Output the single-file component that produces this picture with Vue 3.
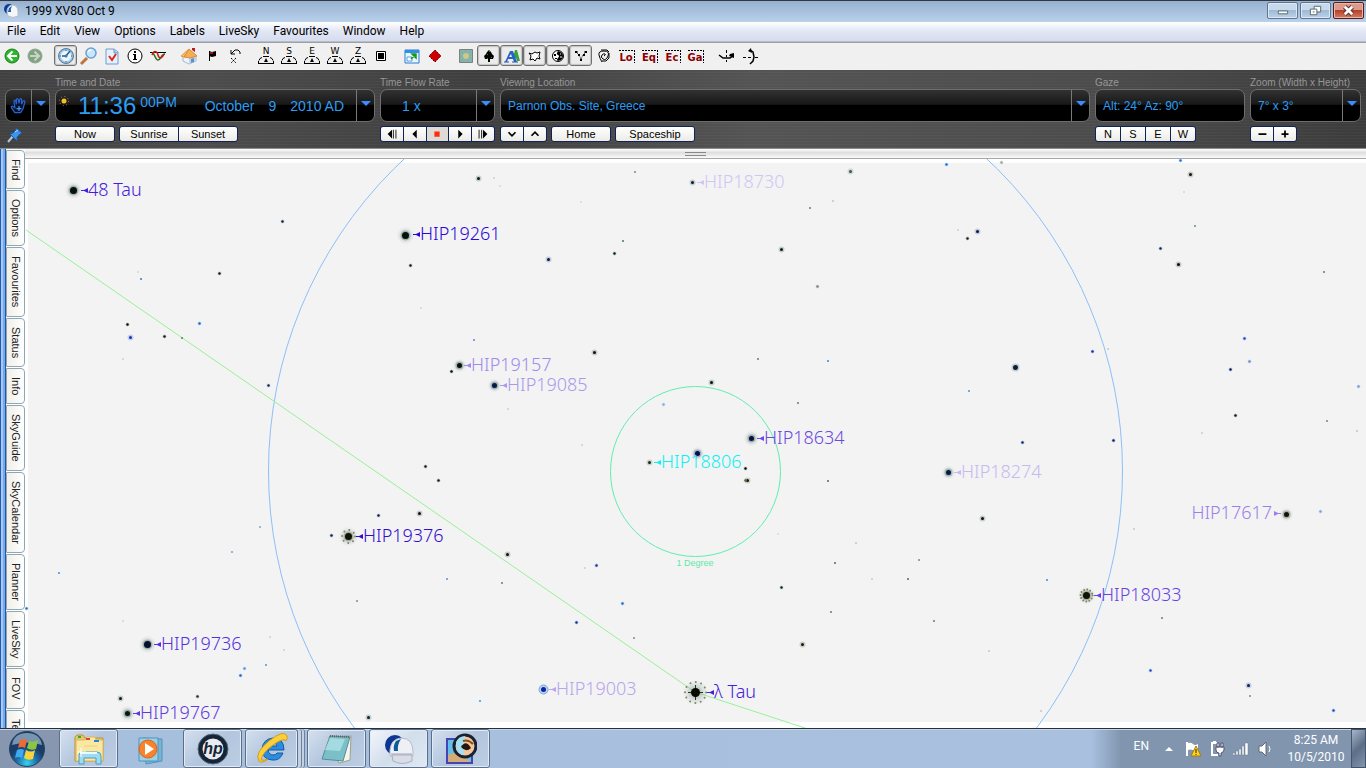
<script setup>
const menus = ["File", "Edit", "View", "Options", "Labels", "LiveSky", "Favourites", "Window", "Help"];

const dome = (letter) =>
  `<text x="10" y="8" text-anchor="middle" font-size="9" font-weight="500">${letter}</text>
   <path d="M7 10.500h6M4 12.500l2-1M16 12.500l-2-1M3 14.500l1-2M17 14.500l-1-2M2 17.500h16M2.500 17v-2M17.500 17v-2" fill="none" stroke="#000"/>
   <path d="M10 12l2 4H8z"/>`;

const frame = (letters) =>
  `<path d="M2 4.500h15M17.500 4v13" fill="none" stroke="#000" stroke-dasharray="2 1"/>
   <text x="9" y="15" text-anchor="middle" font-size="10" font-weight="700" fill="#8c0000">${letters}</text>`;

const toolbar = [
  [
    { name: "Back", svg: '<circle cx="10" cy="10" r="7" fill="#2fb52f" stroke="#168016"/><path d="M10.500 5.500L6 10l4.500 4.500M6.500 10H15" fill="none" stroke="#fff" stroke-width="2"/>' },
    { name: "Forward", svg: '<circle cx="10" cy="10" r="7" fill="#82a182" stroke="#8fa98f"/><path d="M9.500 5.500L14 10l-4.500 4.500M13.500 10H5" fill="none" stroke="#c5d6c5" stroke-width="2"/>' },
  ],
  [
    { name: "Time", on: true, svg: '<circle cx="10" cy="10" r="7.500" fill="#8db9dc" stroke="#4d7da8"/><circle cx="10" cy="10" r="5.500" fill="#eef6fc" stroke="#bdd7ea"/><path d="M10 10l4-5M10 10H6" stroke="#285e90" stroke-width="1.500"/><circle cx="10" cy="10" r="1.500" fill="#3b78ac"/><path d="M10 4v1M10 15v1M4 10h1M15 10h1" stroke="#456"/>' },
    { name: "Find", svg: '<path d="M8 12l-6 6" stroke="#bd7440" stroke-width="3"/><circle cx="12" cy="7" r="5" fill="#c7e6ff" stroke="#6a9fd0" stroke-width="1.500"/><path d="M9 6q1-2 3-2" fill="none" stroke="#fff" stroke-width="1.500"/>' },
    { name: "Planner", svg: '<path d="M4 3h8l4 3v12H4z" fill="#e6f1ff" stroke="#6f9bd0"/><path d="M12 3v4h4" fill="#a9c7ee" stroke="#6f9bd0"/><path d="M7 10l3 4 4-6" fill="none" stroke="#e02a16" stroke-width="2"/>' },
    { name: "Info", svg: '<circle cx="10" cy="10" r="7" fill="#fff" stroke="#000"/><path d="M9 5h2v2H9zM8 8h3v5h1v1H8v-1h1V9H8z"/>' },
    { name: "Graph", svg: '<path d="M2 6.500h16" stroke="#000"/><path d="M4 7c3 0 3 7 6 7s3-6 7-6" fill="none" stroke="#147a14" stroke-width="1.500"/><path d="M4 9c2-5 5-4 6 0s4 4 6-1" fill="none" stroke="#d01818" stroke-width="1.500"/>' },
  ],
  [
    { name: "Home", svg: '<path d="M4 10l6-5 7 6v4l-7 3-6-3z" fill="#eef4fb" stroke="#a0b8d0"/><path d="M10 12l7-2v5l-7 3z" fill="#c2d4e8"/><path d="M2 10l8-7 1 1-6 7z" fill="#ffc06a" stroke="#e09a44"/><path d="M10 3l8 7-7 2-6-1z" fill="#f7ad55" stroke="#d98a32"/><path d="M13 2h3v4l-3-2z" fill="#b51c1c"/><path d="M12 13l3-1v4l-3 1z" fill="#6090c8"/>' },
    { name: "Flag", svg: '<path d="M7.500 5v10" stroke="#000"/><path d="M7 5l3 1 4-1v5l-4 1-3-1z"/><path d="M8 6h3v2H8z" fill="#a01020"/>' },
    { name: "Clear angle", svg: '<path d="M6 8l2-2 2-2h3l2 2v2M6 4v4h4" fill="none" stroke="#000"/><path d="M6 12l5 5M11 12l-5 5" stroke="#000" stroke-dasharray="2 1"/>' },
  ],
  [
    ...["N", "S", "E", "W", "Z"].map((d) => ({ name: `Look ${d}`, svg: dome(d) })),
    { name: "Full view", svg: '<path d="M5.500 5.500h9v9h-9z" fill="#fff" stroke="#000"/><path d="M7 7h6v6H7z"/>' },
  ],
  [
    { name: "Full screen", svg: '<path d="M3 4h14v13H3z" fill="#eaf6ff" stroke="#2d7bd0"/><path d="M3 4h14v3H3z" fill="#2f8fe4"/><path d="M5 11h5v4H5z" fill="#fff" stroke="#58a0e0"/><path d="M9 13l4-4M10 8h4v4z" fill="#16951c" stroke="#16951c" stroke-width="1.500"/>' },
    { name: "Marker", svg: '<path d="M10 4l6 6-6 6-6-6z" fill="#d00000" stroke="#600" stroke-dasharray="2 1"/>' },
  ],
  [
    { name: "Daylight", svg: '<path d="M3.500 3.500h13v13h-13z" fill="#7fb3ae" stroke="#808080"/><circle cx="10" cy="10" r="3" fill="#d2c788"/><circle cx="10" cy="10" r="5" fill="none" stroke="#c9bc78" stroke-dasharray="1 3"/>' },
    { name: "Horizon", on: true, svg: '<path d="M10 4l2 2 1 2 2 2-1 3h-3v3H9v-3H6l-1-3 2-2 1-2z"/><path d="M8 8h1v1H8zM12 11h1v1h-1zM9 13H8v-1h1zM10 5h1v1h-1z" fill="#2c8c2c"/>' },
    { name: "Labels", on: true, svg: '<path d="M11 12l2-8h2l3 11h-3l-1-3z" fill="#35a636"/><path fill-rule="evenodd" d="M3 16L8 5h3l4 11h-3l-1-3H6l-1 3zM7 11h3L9 8z" fill="#2a63c8"/><path d="M2 16h5M10 16h6" stroke="#2458a8"/>' },
    { name: "Stars", on: true, svg: '<path d="M10 6l2 1 3-1-1 4 1 3-3-1-2 3-2-2-3 1 1-4-2-3 3 1z" fill="#fff" stroke="#000"/>' },
    { name: "Planets", on: true, svg: '<circle cx="10" cy="10" r="5.500" fill="#fff" stroke="#000"/><path d="M10 5q5 1 5 5t-5 5q-2-1 0-3t0-3-1-2zM6 8h2v2H6zM7 12h2v1H7z"/><path d="M12 8h1M12 11h2" stroke="#fff"/>' },
    { name: "Constellations", on: true, svg: '<path d="M5 6l3 3 2 4M15 6l-3 3-2 4M6 6h2M13 6h2" fill="none" stroke="#000" stroke-dasharray="1 1"/><path d="M4 5h2v2H4zM14 5h2v2h-2zM7 8h2v2H7zM12 8h2v2h-2zM9 13h2v2H9z"/>' },
    { name: "Deep space", svg: '<path d="M10 10q2-1 1-2t-3 1 1 4 5-3-4-5-5 4 3 7M7 4h6l2 2M15 7v5l-3 3H8" fill="none" stroke="#000"/>' },
    ...["Lo", "Eq", "Ec", "Ga"].map((g) => ({ name: `${g} grid`, svg: frame(g) })),
  ],
  [
    { name: "Rotate left", svg: '<path d="M9.500 4v3M9.500 9v2M9.500 14v2" stroke="#000"/><path d="M2 9l4 3h7l3-2" fill="none" stroke="#000" stroke-width="1.500"/><path d="M13 8l4-1v5l-5-2z"/>' },
    { name: "Rotate up", svg: '<path d="M3 11.500h3M8 11.500h3M15 11.500h3" stroke="#000"/><path d="M10 4l3 2 1 5-1 4-3 3" fill="none" stroke="#000" stroke-width="1.500"/><path d="M8 5l3-3 1 5z"/>' },
  ],
];

const tabs = ["Find", "Options", "Favourites", "Status", "Info", "SkyGuide", "SkyCalendar", "Planner", "LiveSky", "FOV", "Te"];

// x, y, radius, colour
const stars = [
  [73, 190, 4, "#04120a"], [405, 235, 4, "#04120a"], [147, 644, 4, "#02122c"], [127, 713, 3, "#04180f"],
  [348, 536, 4, "#101402"], [1086, 595, 4, "#101402"], [543, 689, 3, "#0428a8"],
  [751, 438, 3, "#02143c"], [697, 453, 3, "#060a5c"], [459, 365, 3, "#041208"], [494, 385, 3, "#061a44"],
  [948, 472, 3, "#061e3c"], [1286, 514, 3, "#141604"], [692, 182, 2, "#06222c"], [1015, 367, 3, "#062038"],
  [548, 259, 2, "#041a54"], [130, 337, 2, "#0838c4"], [419, 513, 2, "#0c1804"], [507, 554, 2, "#04180c"],
  [850, 171, 2, "#3c5850"], [1190, 174, 2, "#0c1c04"], [1178, 264, 2, "#02100a"], [982, 518, 2, "#04180c"],
  [711, 382, 2, "#04180c"], [649, 462, 2, "#183018"], [747, 480, 2, "#141804"], [745, 480, 1, "#507040"],
  [594, 352, 2, "#04180c"], [781, 249, 2, "#04221c"], [977, 231, 2, "#04185c"], [478, 178, 2, "#042410"],
  [120, 698, 2, "#042410"], [368, 717, 2, "#042830"], [802, 644, 2, "#102008"], [1248, 685, 2, "#042464"],
  [282, 221, 1, "#082844"], [219, 273, 1, "#082410"], [127, 324, 1, "#041008"], [164, 336, 1, "#082010"],
  [199, 323, 1, "#1868e0"], [268, 385, 1, "#102c60"], [410, 265, 1, "#082410"], [614, 253, 1, "#082410"],
  [451, 371, 1, "#041008"], [425, 466, 1, "#082410"], [438, 480, 1, "#082018"], [378, 515, 1, "#082060"],
  [331, 535, 1, "#082060"], [596, 565, 1, "#1838a0"], [622, 603, 1, "#1870d0"], [576, 622, 1, "#0830b0"],
  [240, 675, 1, "#1868d0"], [244, 668, 1, "#4898e8"], [26, 608, 1, "#2870c8"], [197, 696, 1, "#183820"],
  [745, 468, 1, "#041008"], [781, 587, 1, "#043028"], [946, 164, 1, "#1870e0"], [1180, 160, 1, "#1870e0"],
  [967, 238, 1, "#102c10"], [1160, 248, 1, "#082c60"], [1092, 351, 1, "#0838a0"], [1244, 338, 1, "#1048c8"],
  [1230, 369, 1, "#081868"], [1235, 415, 1, "#082010"], [1022, 442, 1, "#082c70"], [1113, 440, 1, "#081c70"],
  [1150, 670, 1, "#1858c0"], [1333, 710, 1, "#1050c8"], [663, 404, 1, "#78b0e8"], [1320, 511, 1, "#68a8e8"],
  [1358, 386, 1, "#7898d8"], [1249, 361, 1, "#6888d0"], [817, 286, 1, "#708878"], [1001, 162, 1, "#90a898"],
];

const faintStars = [
  [140, 278, "#7090d8"], [181, 337, "#70a070"], [622, 240, "#709888"], [634, 171, "#90a898"], [473, 339, "#a090e0"],
  [259, 526, "#a0b8d0"], [231, 551, "#a0b8d8"], [58, 572, "#68a8e8"], [446, 578, "#88a8c8"], [501, 582, "#80a090"],
  [356, 600, "#98a8b0"], [633, 637, "#90a8c0"], [265, 664, "#68b0e8"], [479, 700, "#68b0e8"], [797, 402, "#80a088"],
  [827, 480, "#709078"], [834, 562, "#789078"], [809, 207, "#80a088"], [1194, 225, "#80a8a8"], [1323, 271, "#78a088"],
  [757, 358, "#80a088"], [827, 360, "#70a0d8"], [968, 390, "#78a8d8"], [1326, 420, "#88a8a0"], [918, 559, "#a0a0a0"],
  [907, 578, "#709078"], [1046, 579, "#78a0d8"], [1161, 617, "#80a090"], [830, 611, "#80a088"], [933, 620, "#80a078"],
  [1249, 695, "#90a8a0"], [122, 358, "#d4d8f0"], [493, 177, "#d8dcd8"], [499, 185, "#dce0dc"], [580, 201, "#dde0dd"],
  [420, 307, "#d8dcec"], [507, 408, "#d8d8d8"], [581, 444, "#d4d8d4"], [122, 620, "#dcdcdc"], [269, 636, "#d8d8d8"],
  [283, 649, "#d8d8d8"], [855, 542, "#ccd4cc"], [871, 578, "#d4d4d4"], [832, 200, "#ccccec"], [1107, 348, "#d0d4d0"],
  [1356, 430, "#ccd0d4"], [1133, 528, "#d0d4d0"], [988, 650, "#ccd4cc"], [1040, 710, "#d0d4d0"], [1201, 432, "#d4d8d4"],
  [777, 533, "#dde0dd"], [584, 567, "#d8d8d8"], [137, 271, "#dde0dd"], [957, 229, "#d8dcd8"], [1183, 191, "#dcdcdc"],
];

const halos = [
  [73, 190, 9], [405, 235, 9], [147, 644, 9], [127, 713, 8], [751, 438, 8], [697, 453, 7],
  [348, 536, 10], [1086, 595, 9], [459, 365, 7], [494, 385, 7], [948, 472, 7], [1286, 514, 7], [695, 692, 13],
];

const labels = [
  { x: 81, y: 190, text: "48 Tau", color: "#4420dc" },
  { x: 413, y: 234, text: "HIP19261", color: "#2a06d8" },
  { x: 697, y: 182, text: "HIP18730", color: "#cfc6f3" },
  { x: 464, y: 365, text: "HIP19157", color: "#a08aec" },
  { x: 500, y: 385, text: "HIP19085", color: "#a99aea" },
  { x: 757, y: 438, text: "HIP18634", color: "#6a4ae0" },
  { x: 654, y: 462, text: "HIP18806", color: "#10f0f0" },
  { x: 954, y: 472, text: "HIP18274", color: "#c6baf0" },
  { x: 356, y: 536, text: "HIP19376", color: "#300cd0" },
  { x: 1094, y: 595, text: "HIP18033", color: "#6644e4" },
  { x: 154, y: 644, text: "HIP19736", color: "#5430e0" },
  { x: 133, y: 713, text: "HIP19767", color: "#5c3adc" },
  { x: 549, y: 689, text: "HIP19003", color: "#b6a6ec" },
  { x: 707, y: 692, text: "λ Tau", color: "#4420d8" },
];

const flow = [
  { name: "Step back", d: "M3 8l5-5v10zM9 3h1v10H9zM12 3h1v10h-1z" },
  { name: "Run back", d: "M5 8l5-5v10z" },
  { name: "Stop", d: "M5 5h6v6H5z" },
  { name: "Run forward", d: "M11 8L6 3v10z" },
  { name: "Step forward", d: "M13 8L8 3v10zM6 3h1v10H6zM3 3h1v10H3z" },
];

const apps = [
  { name: "Explorer", kind: "open", svg: '<path d="M2 4l2-2h6l2 3h18v23H2z" fill="#e9c768" stroke="#bb9337"/><path d="M3 7h9l2-3h8l1 3h7v21H3z" fill="#f9e7a2" stroke="#d9b75c"/><path d="M5 3h3v2H5z" fill="#3a3"/><path d="M13 5h4v2h-4z" fill="#d43"/><path d="M21 7h5v2h-5z" fill="#28d"/><path d="M11 13h13" stroke="#ecd07f"/><path d="M6 31V22q0-3 3-3h15q4 0 4 4v8h-5v-6H11v6z" fill="#9edaf0" stroke="#4c9ec4"/><path d="M7 20h17" stroke="#e8fbff" stroke-width="2"/><path d="M8 15v9M4 19h9" stroke="#fff"/>' },
  { name: "Media Player", kind: "pinned", svg: '<path d="M8 5l19 1v22l-16 3z" fill="#76b5d6" stroke="#5693b8"/><path d="M4 5h19v23H4z" fill="#9bd0e8" stroke="#4d94bd"/><circle cx="13" cy="16" r="9" fill="#f5842c" stroke="#dd6113"/><path d="M10 10l9 6-9 6z" fill="#fff"/>' },
  { name: "HP", kind: "open", svg: '<circle cx="16" cy="16" r="15" fill="#152536" stroke="#52677c"/><circle cx="16" cy="16" r="10.500" fill="#e8ebef"/><text x="16" y="21" text-anchor="middle" font-size="16" font-style="italic" font-weight="700" fill="#152536">hp</text>' },
  { name: "Internet Explorer", kind: "stack", svg: '<path fill-rule="evenodd" d="M28 17H12q1 5 5 5 3 0 4-2h6q-3 8-11 7-10-1-10-11Q7 6 17 5q11 0 11 12zM12 13h9q-1-4-4-4-4 0-5 4z" fill="#2b8de0" stroke="#145aa4"/><path d="M3 28Q-2 20 13 8t18-5q1 2-1 5-2-4-13 4T5 27q3 1 7-1-6 5-9 2z" fill="#f9cf3c" stroke="#d59b16"/>' },
  { name: "Notepad", kind: "open", svg: '<path d="M8 4l22-1-1 24-11 3z" fill="#f5f5ed" stroke="#a0a08c"/><path d="M9 3l20 1-7 24L1 26z" fill="#7bbfc8" stroke="#548e98"/><path d="M9 5l15 1-5 12-15-1z" fill="#a3dbe0"/><path d="M9 3l20 1" stroke="#666" stroke-width="2" stroke-dasharray="1 1"/>' },
  { name: "Starry Night", kind: "active", svg: '<circle cx="12" cy="12" r="10" fill="#0c3694"/><path d="M7 17q1-11 11-12 12 0 12 14v4H7z" fill="#eef0f5" stroke="#b7bcc8"/><path d="M9 22h20v6q-10 5-19 0z" fill="#dadde8" stroke="#a9afbf"/><path d="M13 8l5-2q-4 6-3 12h-4q-1-6 2-10z" fill="#0c5b9a"/><path d="M8 21h21" stroke="#a0a5b8"/>' },
  { name: "Viewer", kind: "open", svg: '<path d="M2 6h25v24H2z" fill="#65bfe5" stroke="#4444b4" stroke-width="2"/><path d="M3 22l9-3 14 10H3z" fill="#d5ab78"/><circle cx="20" cy="13" r="11" fill="#f3c79a" stroke="#182232" stroke-width="3"/><path d="M11 9q3-6 9-6l-1 19q-7-1-8-8z" fill="#a7def0"/><path d="M16 14q5-8 10 1-5 5-10-1z" fill="#27160f"/><path d="M18 8q5-2 10 3" fill="none" stroke="#8d4b20" stroke-width="2"/>' },
];
</script>

<template>
  <div class="window">
    <header class="titlebar">
      <svg class="app-icon" viewBox="0 0 16 16" aria-hidden="true">
        <circle cx="6" cy="6" r="5" fill="#0b3c9c" />
        <path d="M4 9q0-6 5-7 6 0 6 7v4q-5 3-10 0z" fill="#f4f6fa" stroke="#b4bccb" />
        <path d="M6 5l3-2q-2 3-1 6H5z" fill="#1264a6" />
      </svg>
      <h1>1999 XV80 Oct 9</h1>
      <div class="window-buttons">
        <button aria-label="Minimize">
          <svg viewBox="0 0 28 16"><path d="M9.500 8.500h10v3h-10z" fill="#fff" stroke="#566" /></svg>
        </button>
        <button aria-label="Restore">
          <svg viewBox="0 0 28 16">
            <path d="M12.500 3.500h7v6h-7z" fill="#fff" stroke="#566" />
            <path d="M8.500 6.500h7v6h-7z" fill="#fff" stroke="#566" />
            <path d="M11 9h2v1h-2z" fill="#566" />
          </svg>
        </button>
        <button class="close" aria-label="Close">
          <svg viewBox="0 0 28 16">
            <path d="M10 4l8 8M18 4l-8 8" stroke="#5d3030" stroke-width="5" />
            <path d="M10 4l8 8M18 4l-8 8" stroke="#fff" stroke-width="3" />
          </svg>
        </button>
      </div>
    </header>

    <nav class="menubar">
      <button v-for="menu in menus" :key="menu">{{ menu }}</button>
    </nav>

    <div class="toolbar" role="toolbar">
      <div v-for="(group, i) in toolbar" :key="i" class="tool-group">
        <button v-for="tool in group" :key="tool.name" :class="{ on: tool.on }" :aria-label="tool.name">
          <svg viewBox="0 0 20 20" v-html="tool.svg"></svg>
        </button>
      </div>
    </div>

    <section class="panel">
      <div class="group">
        <span class="caption"></span>
        <div class="lcd">
          <button class="hand" aria-label="Hand tool">
            <svg viewBox="0 0 24 24">
              <path d="M7 20l-4-6q-1-2 1-2l3 2-1-8q1-2 2 0l1 4V4q1-2 2 0l1 5 1-5q1-2 2 0v6l2-4q2-1 2 1l-2 8-3 5z" fill="#04122c" stroke="#2d62c8" stroke-width="1.500" />
              <path d="M12 12v6M9 15h6" stroke="#4590ff" stroke-width="1.500" />
            </svg>
          </button>
          <button class="drop" aria-label="Choose tool"></button>
        </div>
        <button class="pin" aria-label="Pin panel">
          <svg viewBox="0 0 16 16">
            <path d="M1 15l5-6" stroke="#b0c4dc" stroke-width="2" />
            <path d="M3 7l3-1 3-3V1l6 5-2 1-3 3v4z" fill="#3d94ec" stroke="#1c5da8" />
            <path d="M8 5l3-2" stroke="#c0e0ff" />
          </svg>
        </button>
      </div>

      <div class="group">
        <span class="caption">Time and Date</span>
        <div class="lcd">
          <svg class="sun" viewBox="0 0 12 12" aria-hidden="true">
            <circle cx="6" cy="6" r="4.500" fill="none" stroke="#a09470" stroke-dasharray="1 2.530" />
            <circle cx="6" cy="6" r="2.500" fill="#f4c21c" />
          </svg>
          <span class="time">11:36</span>
          <span class="seconds">00PM</span>
          <span class="date"><span>October</span><span>9</span><span>2010 AD</span></span>
          <button class="drop" aria-label="Choose time"></button>
        </div>
        <div class="buttons">
          <div class="set"><button class="wide">Now</button></div>
          <div class="set"><button class="wide">Sunrise</button><button class="wide">Sunset</button></div>
        </div>
      </div>

      <div class="group">
        <span class="caption">Time Flow Rate</span>
        <div class="lcd">
          <span class="rate">1 x</span>
          <button class="drop" aria-label="Choose rate"></button>
        </div>
        <div class="buttons">
          <div class="set">
            <button v-for="step in flow" :key="step.name" :class="{ stop: step.name === 'Stop' }" :aria-label="step.name">
              <svg viewBox="0 0 16 16"><path :d="step.d" /></svg>
            </button>
          </div>
        </div>
      </div>

      <div class="group">
        <span class="caption">Viewing Location</span>
        <div class="lcd">
          <span class="value">Parnon Obs. Site, Greece</span>
          <button class="drop" aria-label="Choose location"></button>
        </div>
        <div class="buttons">
          <div class="set">
            <button aria-label="Descend"><svg viewBox="0 0 16 16"><path class="line" d="M4 6l4 4 4-4" /></svg></button>
            <button aria-label="Ascend"><svg viewBox="0 0 16 16"><path class="line" d="M4 10l4-4 4 4" /></svg></button>
          </div>
          <div class="set"><button class="wide">Home</button></div>
          <div class="set"><button class="wider">Spaceship</button></div>
        </div>
      </div>

      <div class="group">
        <span class="caption">Gaze</span>
        <div class="lcd"><span class="value">Alt: 24° Az: 90°</span></div>
        <div class="buttons">
          <div class="set compass"><button v-for="d in ['N', 'S', 'E', 'W']" :key="d">{{ d }}</button></div>
        </div>
      </div>

      <div class="group">
        <span class="caption">Zoom (Width x Height)</span>
        <div class="lcd">
          <span class="value">7° x 3°</span>
          <button class="drop" aria-label="Choose zoom"></button>
        </div>
        <div class="buttons">
          <div class="set">
            <button aria-label="Zoom out"><svg viewBox="0 0 16 16"><path d="M4 7h9v2H4z" /></svg></button>
            <button aria-label="Zoom in"><svg viewBox="0 0 16 16"><path d="M4 7h3V4h2v3h3v2H9v3H7V9H4z" /></svg></button>
          </div>
        </div>
      </div>
    </section>

    <main class="workspace">
      <nav class="side-tabs">
        <button v-for="tab in tabs" :key="tab">{{ tab }}</button>
      </nav>
      <div class="view">
        <div class="splitter"><span class="grip"></span></div>
        <svg class="sky" viewBox="25 159 1341 569" preserveAspectRatio="xMidYMid slice">
          <defs>
            <radialGradient id="halo">
              <stop offset="0.300" stop-color="#5c7c78" stop-opacity="0.400" />
              <stop offset="1" stop-color="#a8c0bc" stop-opacity="0" />
            </radialGradient>
          </defs>
          <rect x="28" y="163" width="1338" height="559" fill="#f3f3f3" />
          <circle cx="695.500" cy="471" r="427" class="field" />
          <path d="M26 230L695 692L808 729" class="ecliptic" />
          <circle cx="695.500" cy="471.500" r="85" class="degree" />
          <text x="695" y="566" class="degree-label">1 Degree</text>

          <circle v-for="(h, i) in halos" :key="'h' + i" :cx="h[0] + 0.5" :cy="h[1] + 0.5" :r="h[2]" fill="url(#halo)" />
          <rect v-for="(f, i) in faintStars" :key="'f' + i" :x="f[0]" :y="f[1]" width="2" height="2" :fill="f[2]" />
          <g v-for="(s, i) in stars" :key="'s' + i" :fill="s[3]">
            <circle :cx="s[0] + 0.5" :cy="s[1] + 0.5" :r="s[2] + 1" opacity="0.180" />
            <circle :cx="s[0] + 0.5" :cy="s[1] + 0.5" :r="s[2] < 2 ? 1.2 : s[2] - 0.5" />
          </g>

          <circle cx="348.500" cy="536.500" r="6.500" class="variable" stroke-dasharray="0 5.105" />
          <circle cx="1086.500" cy="595.500" r="6" class="variable" stroke-dasharray="0 3.141" />
          <circle cx="543.500" cy="689.500" r="4.500" fill="none" stroke="#68a4e0" />
          <circle cx="695.500" cy="692.500" r="10.500" class="variable" stroke-dasharray="0 5.498" />
          <path d="M695.500 685v15M688 692.500h15" stroke="#30340c" />
          <circle cx="695.500" cy="692.500" r="4.500" fill="#080a00" />

          <g v-for="label in labels" :key="label.text" :fill="label.color">
            <path :d="`M${label.x} ${label.y}h3l4-2v5l-4-2h-3z`" />
            <text :x="label.x + 7" :y="label.y + 6" class="star-label">{{ label.text }}</text>
          </g>
          <g fill="#9a80ea">
            <path d="M1281 513h-3l-4-2v5l4-2h3z" />
            <text x="1272" y="519" text-anchor="end" class="star-label">HIP17617</text>
          </g>
        </svg>
      </div>
    </main>

    <footer class="taskbar">
      <button class="start" aria-label="Start">
        <svg viewBox="0 0 38 38">
          <defs>
            <radialGradient id="orb" cy="0.900">
              <stop offset="0" stop-color="#35d3ef" />
              <stop offset="0.600" stop-color="#1b6ba7" />
              <stop offset="1" stop-color="#193d68" />
            </radialGradient>
          </defs>
          <circle cx="19" cy="19" r="17.500" fill="url(#orb)" stroke="#28435f" />
          <path d="M4 15Q6 3 19 3t15 12q-14-5-30 0z" fill="#c5dced" opacity="0.550" />
          <path d="M12 10q4-2 7 0l-2 8q-3-2-7 0z" fill="#ee6a34" />
          <path d="M21 11q4 2 9-1l-2 9q-5 2-9-1z" fill="#8bc643" />
          <path d="M9 20q4-2 7 0l-2 8q-3-2-7 0z" fill="#3eaaf0" />
          <path d="M18 20q5 3 9 0l-2 9q-5 2-9-1z" fill="#fcd23a" />
        </svg>
      </button>
      <div class="apps">
        <button v-for="app in apps" :key="app.name" :class="app.kind" :aria-label="app.name">
          <svg viewBox="0 0 32 32" v-html="app.svg"></svg>
        </button>
      </div>
      <div class="tray">
        <span class="lang">EN</span>
        <svg viewBox="0 0 16 16"><path d="M4 10l4-4 4 4z" fill="#fff" /></svg>
        <svg viewBox="0 0 16 16">
          <path d="M2 1v14" stroke="#fff" stroke-width="2" />
          <path d="M3 2q3-1 5 1t5 0v6q-3 1-5 0T3 9z" fill="#fff" />
          <path d="M11 5l5 10H6z" fill="#ffd42a" stroke="#a87b00" />
          <path d="M11 8v4M11 13v1" stroke="#222" />
        </svg>
        <svg viewBox="0 0 16 16">
          <path d="M8 2H3v12h6M4 1h3" fill="none" stroke="#fff" stroke-width="2" />
          <path d="M7 6h8v3q-1 3-3 3v3h-2v-3q-3 0-3-3zM8 2h2v4H8zM12 2h2v4h-2z" fill="#fff" stroke="#557" />
        </svg>
        <svg viewBox="0 0 16 16">
          <path d="M0 12h2v2H0zM3 10h2v4H3zM6 8h2v6H6zM9 5h2v9H9zM12 2h3v12h-3z" fill="#fff" stroke="#68788e" stroke-width="0.500" />
        </svg>
        <svg viewBox="0 0 16 16">
          <path d="M2 5h3l4-4v14l-4-4H2z" fill="#fff" stroke="#667" />
          <path d="M12 5q2 3 0 6" fill="none" stroke="#fff" />
        </svg>
        <div class="clock"><span>8:25 AM</span><span>10/5/2010</span></div>
      </div>
      <button class="show-desktop" aria-label="Show desktop"></button>
    </footer>
  </div>
</template>

<style>
body {
  margin: 0;
}
</style>

<style scoped>
.window {
  display: flex;
  flex-direction: column;
  height: 100vh;
  overflow: hidden;
  background: #fff;
  color: #000;
  font-family: "Liberation Sans", Arial, sans-serif;
}

button {
  margin: 0;
  padding: 0;
  border: 0;
  background: none;
  color: inherit;
  font: inherit;
}

svg {
  display: block;
}

.titlebar {
  display: flex;
  flex: none;
  align-items: center;
  gap: 6px;
  box-sizing: border-box;
  height: 22px;
  padding: 0 2px 2px 3px;
  border-top: 1px solid #34373c;
  background: linear-gradient(#96b1d0, #b9d1ea);
}

.app-icon {
  width: 16px;
  height: 16px;
}

.titlebar h1 {
  flex: 1;
  margin: 0;
  font: 400 12px/20px Roboto, sans-serif;
}

.window-buttons {
  display: flex;
  gap: 2px;
}

.window-buttons button {
  border: 1px solid #5c7694;
  border-radius: 2px;
  background: linear-gradient(#c8d9eb 45%, #9fb9d6 50%, #bcd2e8);
  box-shadow: inset 0 0 0 1px #dce8f4;
}

.window-buttons svg {
  width: 29px;
  height: 15px;
}

.window-buttons .close {
  border-color: #571b1b;
  background: linear-gradient(#dc9a8a 45%, #b8402b 50%, #d07d60);
  box-shadow: inset 0 0 0 1px #e9b7a9;
}

.menubar {
  display: flex;
  flex: none;
  gap: 14px;
  box-sizing: border-box;
  height: 20px;
  padding: 0 7px;
  border-bottom: 1px solid #b5bccd;
  background: linear-gradient(#fff, #e3e8f5 45%, #d5dcee);
  font: 400 12px/19px Roboto, sans-serif;
}

.toolbar {
  display: flex;
  flex: none;
  align-items: center;
  gap: 8px;
  box-sizing: border-box;
  height: 28px;
  padding-bottom: 2px;
  border-top: 1px solid #a0a0a0;
  background: #f0f0f0;
}

.tool-group {
  display: flex;
}

.tool-group button {
  display: grid;
  place-items: center;
  box-sizing: border-box;
  width: 23px;
  height: 21px;
  border: 1px solid transparent;
  border-radius: 3px;
}

.tool-group .on {
  border-color: #707070;
  background: #ececec;
  box-shadow: inset 0 0 1px 1px #c4c4c4;
}

.tool-group svg {
  width: 20px;
  height: 20px;
  margin: -1px 0;
  font-family: "DejaVu Sans", sans-serif;
}

.panel {
  display: grid;
  flex: none;
  grid-template-columns: 45px 320px 115px 1fr 150px 111px;
  gap: 5px;
  box-sizing: border-box;
  height: 79px;
  padding: 6px 5px;
  border-bottom: 1px solid #8c8c8c;
  background:
    repeating-linear-gradient(transparent 0 2px, rgb(255 255 255 / 3%) 2px 3px),
    linear-gradient(90deg, #414141, #4c4c4c 15%, #3f3f3f 35%, #545454 55%, #4c4c4c 80%, #3c3c3c);
}

.group {
  min-width: 0;
}

.caption {
  display: block;
  height: 13px;
  color: #969696;
  font-size: 10px;
  line-height: 13px;
  white-space: nowrap;
}

.lcd {
  display: flex;
  align-items: center;
  box-sizing: border-box;
  height: 33px;
  border: 1px solid #6e6e6e;
  border-radius: 7px;
  background: linear-gradient(#323232, #181818 46%, #000 50%);
  color: #2e9cf2;
  font-size: 12px;
  overflow: hidden;
}

.hand {
  display: grid;
  flex: 1;
  place-items: center;
}

.hand svg {
  width: 20px;
  height: 20px;
}

.drop {
  display: grid;
  flex: none;
  place-items: center;
  width: 18px;
  height: 100%;
  margin-left: auto;
  border-left: 1px solid #7a7a7a;
}

.drop::before {
  content: "";
  margin-bottom: 4px;
  border: 5px solid transparent;
  border-top-color: #3d8cff;
  border-bottom: 0;
}

.sun {
  align-self: flex-start;
  width: 12px;
  height: 12px;
  margin: 5px 8px 0 2px;
}

.time {
  font-size: 24px;
}

.seconds {
  align-self: flex-start;
  margin-left: 4px;
  font-size: 14px;
  line-height: 24px;
}

.date {
  display: flex;
  flex: 1;
  gap: 14px;
  justify-content: flex-end;
  padding-right: 12px;
  font-size: 14px;
}

.rate {
  padding-left: 21px;
  font-size: 14px;
}

.value {
  padding-left: 7px;
}

.buttons {
  display: flex;
  gap: 4px;
  margin-top: 4px;
}

.set {
  display: flex;
  border: 1px solid #0f2359;
  border-radius: 3px;
  background: #0f2359;
  gap: 1px;
  overflow: hidden;
}

.set button {
  display: grid;
  place-items: center;
  width: 22px;
  height: 14px;
  background: linear-gradient(#fff, #ecebe6);
  color: #000;
  font-size: 11px;
  line-height: 14px;
}

.set .wide {
  width: 58px;
}

.set .wider {
  width: 78px;
}

.compass button {
  width: 24px;
}

.set svg {
  width: 16px;
  height: 14px;
}

.set .line {
  fill: none;
  stroke: #000;
  stroke-width: 2;
}

.set .stop {
  background: #dedbd5;
  fill: #ff2c10;
}

.pin {
  display: block;
  margin: 5px 2px 0;
}

.pin svg {
  width: 16px;
  height: 16px;
}

.workspace {
  display: flex;
  flex: 1;
  min-height: 0;
}

.side-tabs {
  display: flex;
  flex: none;
  flex-direction: column;
  gap: 1px;
  box-sizing: border-box;
  width: 25px;
  padding: 1px 0 0 6px;
  background: linear-gradient(90deg, #1f5cb8 1px, #a9c8f0 1px 3px, #7ba8e4 3px 5px, #1d57ae 5px 6px, #fff 6px);
  overflow: hidden;
}

.side-tabs button {
  flex: none;
  box-sizing: border-box;
  width: 19px;
  padding: 8px 0;
  border: 1px solid #8fa7b4;
  border-radius: 0 4px 4px 0;
  background: linear-gradient(90deg, #f0efe8, #fff);
  color: #222;
  font-size: 11px;
  line-height: 17px;
  text-align: left;
  writing-mode: vertical-rl;
}

.view {
  display: flex;
  flex: 1;
  flex-direction: column;
  min-width: 0;
}

.splitter {
  display: grid;
  flex: none;
  place-items: center;
  box-sizing: border-box;
  height: 10px;
  border-bottom: 1px solid #a8a8a8;
  background: linear-gradient(#fff, #dedede 40%, #fafafa);
}

.grip {
  box-sizing: border-box;
  width: 21px;
  height: 4px;
  border: solid #888;
  border-width: 1px 0;
}

.sky {
  flex: 1;
  width: 100%;
  min-height: 0;
}

.field {
  fill: none;
  stroke: #8cc0f8;
}

.ecliptic {
  fill: none;
  stroke: #98f098;
}

.degree {
  fill: none;
  stroke: #60eeb0;
}

.degree-label {
  fill: #60e8a8;
  font-size: 9px;
  text-anchor: middle;
}

.variable {
  fill: none;
  stroke: #84865c;
  stroke-linecap: round;
  stroke-width: 2;
}

.star-label {
  font-family: "Noto Sans", sans-serif;
  font-size: 18px;
  font-weight: 300;
}

.taskbar {
  display: flex;
  flex: none;
  box-sizing: border-box;
  height: 40px;
  border-top: 1px solid #26303e;
  background: linear-gradient(90deg, #8797af 59px, #a6bfdd 62px, #a9c1df calc(100% - 275px), #8195af calc(100% - 245px));
  box-shadow: inset 0 1px #c8d6e8;
}

.start {
  width: 59px;
  padding-left: 8px;
}

.start svg {
  width: 38px;
  height: 38px;
}

.apps {
  display: flex;
  flex: 1;
  gap: 3px;
}

.apps button {
  display: grid;
  place-items: center;
  box-sizing: border-box;
  width: 59px;
  height: 39px;
  border: 1px solid transparent;
  border-radius: 3px;
}

.apps svg {
  width: 32px;
  height: 32px;
}

.apps .open,
.apps .stack,
.apps .active {
  border-color: #5d6f88;
  background: linear-gradient(135deg, #d4e0ef, #b2c5dd 50%, #bccee3);
  box-shadow: inset 0 0 0 1px #e2ebf5;
}

.apps .stack {
  width: 53px;
  margin-right: 6px;
  box-shadow: inset 0 0 0 1px #e2ebf5, 3px 0 #c2d1e4, 4px 0 #6f819a, 6px 0 #c2d1e4, 7px 0 #6f819a;
}

.apps .active {
  background: linear-gradient(135deg, #f2f6fb, #d2deec 50%, #dfe9f3);
}

.tray {
  display: flex;
  align-items: center;
  gap: 8px;
  color: #fff;
  font: 400 12px/17px Roboto, sans-serif;
}

.tray svg {
  width: 16px;
  height: 16px;
}

.lang {
  margin-right: 4px;
  padding-bottom: 5px;
}

.clock {
  display: flex;
  flex-direction: column;
  align-items: center;
  width: 70px;
}

.show-desktop {
  box-sizing: border-box;
  width: 15px;
  height: 100%;
  border: 1px solid #44546a;
  background: linear-gradient(135deg, #a7b5c8, #5c6e88 50%, #8496ae);
}
</style>
